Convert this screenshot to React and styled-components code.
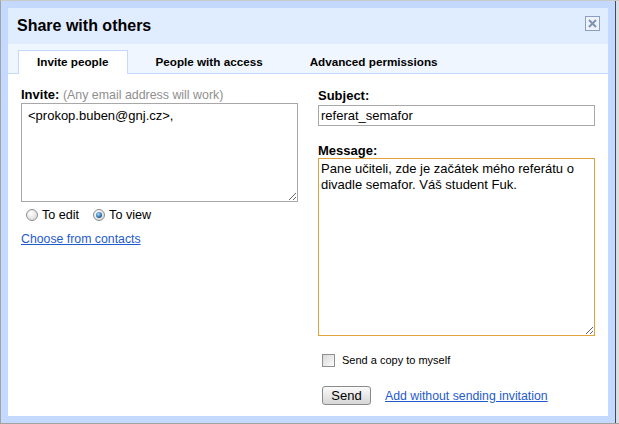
import React from 'react';
import styled, { createGlobalStyle } from 'styled-components';

const Global = createGlobalStyle`
  html, body { margin: 0; padding: 0; }
  body {
    background: #dcdcdc;
    font-family: "Liberation Sans", Arial, sans-serif;
    color: #000;
  }
`;

const Screen = styled.div`
  width: 619px;
  height: 424px;
  box-sizing: border-box;
  border-left: 1px solid #a3a3a3;
  border-top: 1px solid #c9c9c9;
  border-bottom: 1px solid #a3a3a3;
  background: #dedede;
`;

const Frame = styled.div`
  width: 615px;
  height: 422px;
  box-sizing: border-box;
  padding: 7px;
  background: #c3d9ff;
  border-right: 1px solid #3b4c66;
`;

const Dialog = styled.div`
  height: 100%;
  background: #fff;
  display: flex;
  flex-direction: column;
`;

const TitleBar = styled.div`
  height: 36px;
  flex: none;
  background: #e0ecff;
  display: flex;
  align-items: center;
  justify-content: space-between;
  padding: 0 8px 0 9px;
`;

const Title = styled.h1`
  margin: 0;
  font-size: 16px;
  font-weight: bold;
  line-height: 20px;
`;

const CloseBtn = styled.button`
  align-self: flex-start;
  margin-top: 8px;
  width: 15px;
  height: 15px;
  padding: 0;
  border: 1px solid #8aa0c2;
  background: #eef3fb;
  display: flex;
  align-items: center;
  justify-content: center;
  cursor: pointer;
`;

const TabBar = styled.div`
  height: 30px;
  flex: none;
  box-sizing: border-box;
  padding: 6px 0 0 10px;
  background: #f0f6ff;
  border-bottom: 1px solid #c3d9ff;
  display: flex;
  align-items: flex-start;
  gap: 8px;
`;

const Tab = styled.div`
  height: 24px;
  box-sizing: border-box;
  margin-bottom: -1px;
  padding: 0 19px 0 18px;
  border: 1px solid ${p => (p.$active ? '#c3d9ff' : 'transparent')};
  border-bottom: 0;
  background: ${p => (p.$active ? '#fff' : 'transparent')};
  font-size: 11.7px;
  font-weight: bold;
  line-height: 22px;
  white-space: nowrap;
`;

const Body = styled.div`
  display: grid;
  grid-template-columns: 277px 277px;
  column-gap: 20px;
  padding: 13px 13px 0;
`;

const Column = styled.div`
  display: flex;
  flex-direction: column;
  align-items: flex-start;
`;

const Label = styled.div`
  font-size: 13px;
  font-weight: bold;
  line-height: ${p => (p.$tight ? '15px' : '16px')};
  padding-top: ${p => (p.$tight ? '1px' : '0')};
  margin-top: ${p => p.$gap || '0'};
  white-space: nowrap;
`;

const Hint = styled.span`
  font-size: 12.4px;
  font-weight: normal;
  color: #8f8f8f;
`;

const TextArea = styled.textarea`
  display: block;
  width: 277px;
  height: ${p => p.$h}px;
  box-sizing: border-box;
  margin: 0;
  border: 1px solid ${p => (p.$focus ? '#e0a23a' : '#a8a8a8')};
  padding: ${p => (p.$focus ? '2px' : '4px 6px')};
  font-family: "Liberation Sans", Arial, sans-serif;
  font-size: 13px;
  line-height: 16px;
  color: #000;
  outline: none;
  overflow: hidden;
  resize: both;
`;

const TextInput = styled.input`
  display: block;
  width: 277px;
  height: 21px;
  box-sizing: border-box;
  margin: 2px 0 0;
  border: 1px solid #a8a8a8;
  padding: 0 2px;
  font-family: "Liberation Sans", Arial, sans-serif;
  font-size: 13px;
  color: #000;
  outline: none;
`;

const RadioRow = styled.div`
  margin: 5px 0 0 5px;
  height: 16px;
  display: flex;
  align-items: center;
  font-size: 12.6px;
`;

const RadioItem = styled.label`
  display: flex;
  align-items: center;
  gap: 4px;
  margin-right: 14px;
`;

const Radio = styled.span`
  width: 12px;
  height: 12px;
  box-sizing: border-box;
  border-radius: 50%;
  border: 1px solid #8d8d8d;
  background: radial-gradient(circle at 40% 35%, #ffffff, #d2d2d2);
  display: flex;
  align-items: center;
  justify-content: center;

  &::after {
    content: '';
    display: ${p => (p.$checked ? 'block' : 'none')};
    width: 6px;
    height: 6px;
    border-radius: 50%;
    background: radial-gradient(circle at 40% 35%, #a6dcff, #1a5a92 70%);
  }
`;

const Link = styled.a`
  font-size: 12.3px;
  line-height: 16px;
  color: #1f5bcc;
  text-decoration: underline;
  cursor: pointer;
  white-space: nowrap;
  margin-top: ${p => p.$gap || '0'};
`;

const CheckRow = styled.label`
  margin: 18px 0 0 4px;
  display: flex;
  align-items: center;
  gap: 7px;
  font-size: 11px;
  line-height: 13px;
`;

const CheckBox = styled.span`
  width: 13px;
  height: 13px;
  box-sizing: border-box;
  border: 1px solid #8f8f8f;
  background: linear-gradient(135deg, #d8d8d8, #fbfbfb);
`;

const Actions = styled.div`
  margin: 19px 0 0 4px;
  display: flex;
  align-items: center;
  gap: 14px;
`;

const Button = styled.button`
  width: 49px;
  height: 19px;
  padding: 0;
  border: 1px solid #8a8a8a;
  border-radius: 3px;
  background: linear-gradient(#fbfbfb, #e6e6e6 55%, #d6d6d6);
  font-family: "Liberation Sans", Arial, sans-serif;
  font-size: 13px;
  color: #000;
  line-height: 17px;
`;

export default function App() {
  return (
    <>
      <Global />
      <Screen>
        <Frame>
          <Dialog>
            <TitleBar>
              <Title>Share with others</Title>
              <CloseBtn aria-label="Close">
                <svg width="9" height="9" viewBox="0 0 9 9">
                  <path d="M1 1 L8 8 M8 1 L1 8" stroke="#7f93b3" strokeWidth="2" />
                </svg>
              </CloseBtn>
            </TitleBar>
            <TabBar>
              <Tab $active>Invite people</Tab>
              <Tab>People with access</Tab>
              <Tab>Advanced permissions</Tab>
            </TabBar>
            <Body>
              <Column>
                <Label>
                  Invite: <Hint>(Any email address will work)</Hint>
                </Label>
                <TextArea $h={99} defaultValue="<prokop.buben@gnj.cz>," />
                <RadioRow>
                  <RadioItem>
                    <Radio />
                    To edit
                  </RadioItem>
                  <RadioItem>
                    <Radio $checked />
                    To view
                  </RadioItem>
                </RadioRow>
                <Link $gap="8px">Choose from contacts</Link>
              </Column>
              <Column>
                <Label $tight>Subject:</Label>
                <TextInput defaultValue="referat_semafor" />
                <Label $tight $gap="16px">Message:</Label>
                <TextArea
                  $h={178}
                  $focus
                  defaultValue="Pane učiteli, zde je začátek mého referátu o divadle semafor. Váš student Fuk."
                />
                <CheckRow>
                  <CheckBox />
                  Send a copy to myself
                </CheckRow>
                <Actions>
                  <Button>Send</Button>
                  <Link>Add without sending invitation</Link>
                </Actions>
              </Column>
            </Body>
          </Dialog>
        </Frame>
      </Screen>
    </>
  );
}
